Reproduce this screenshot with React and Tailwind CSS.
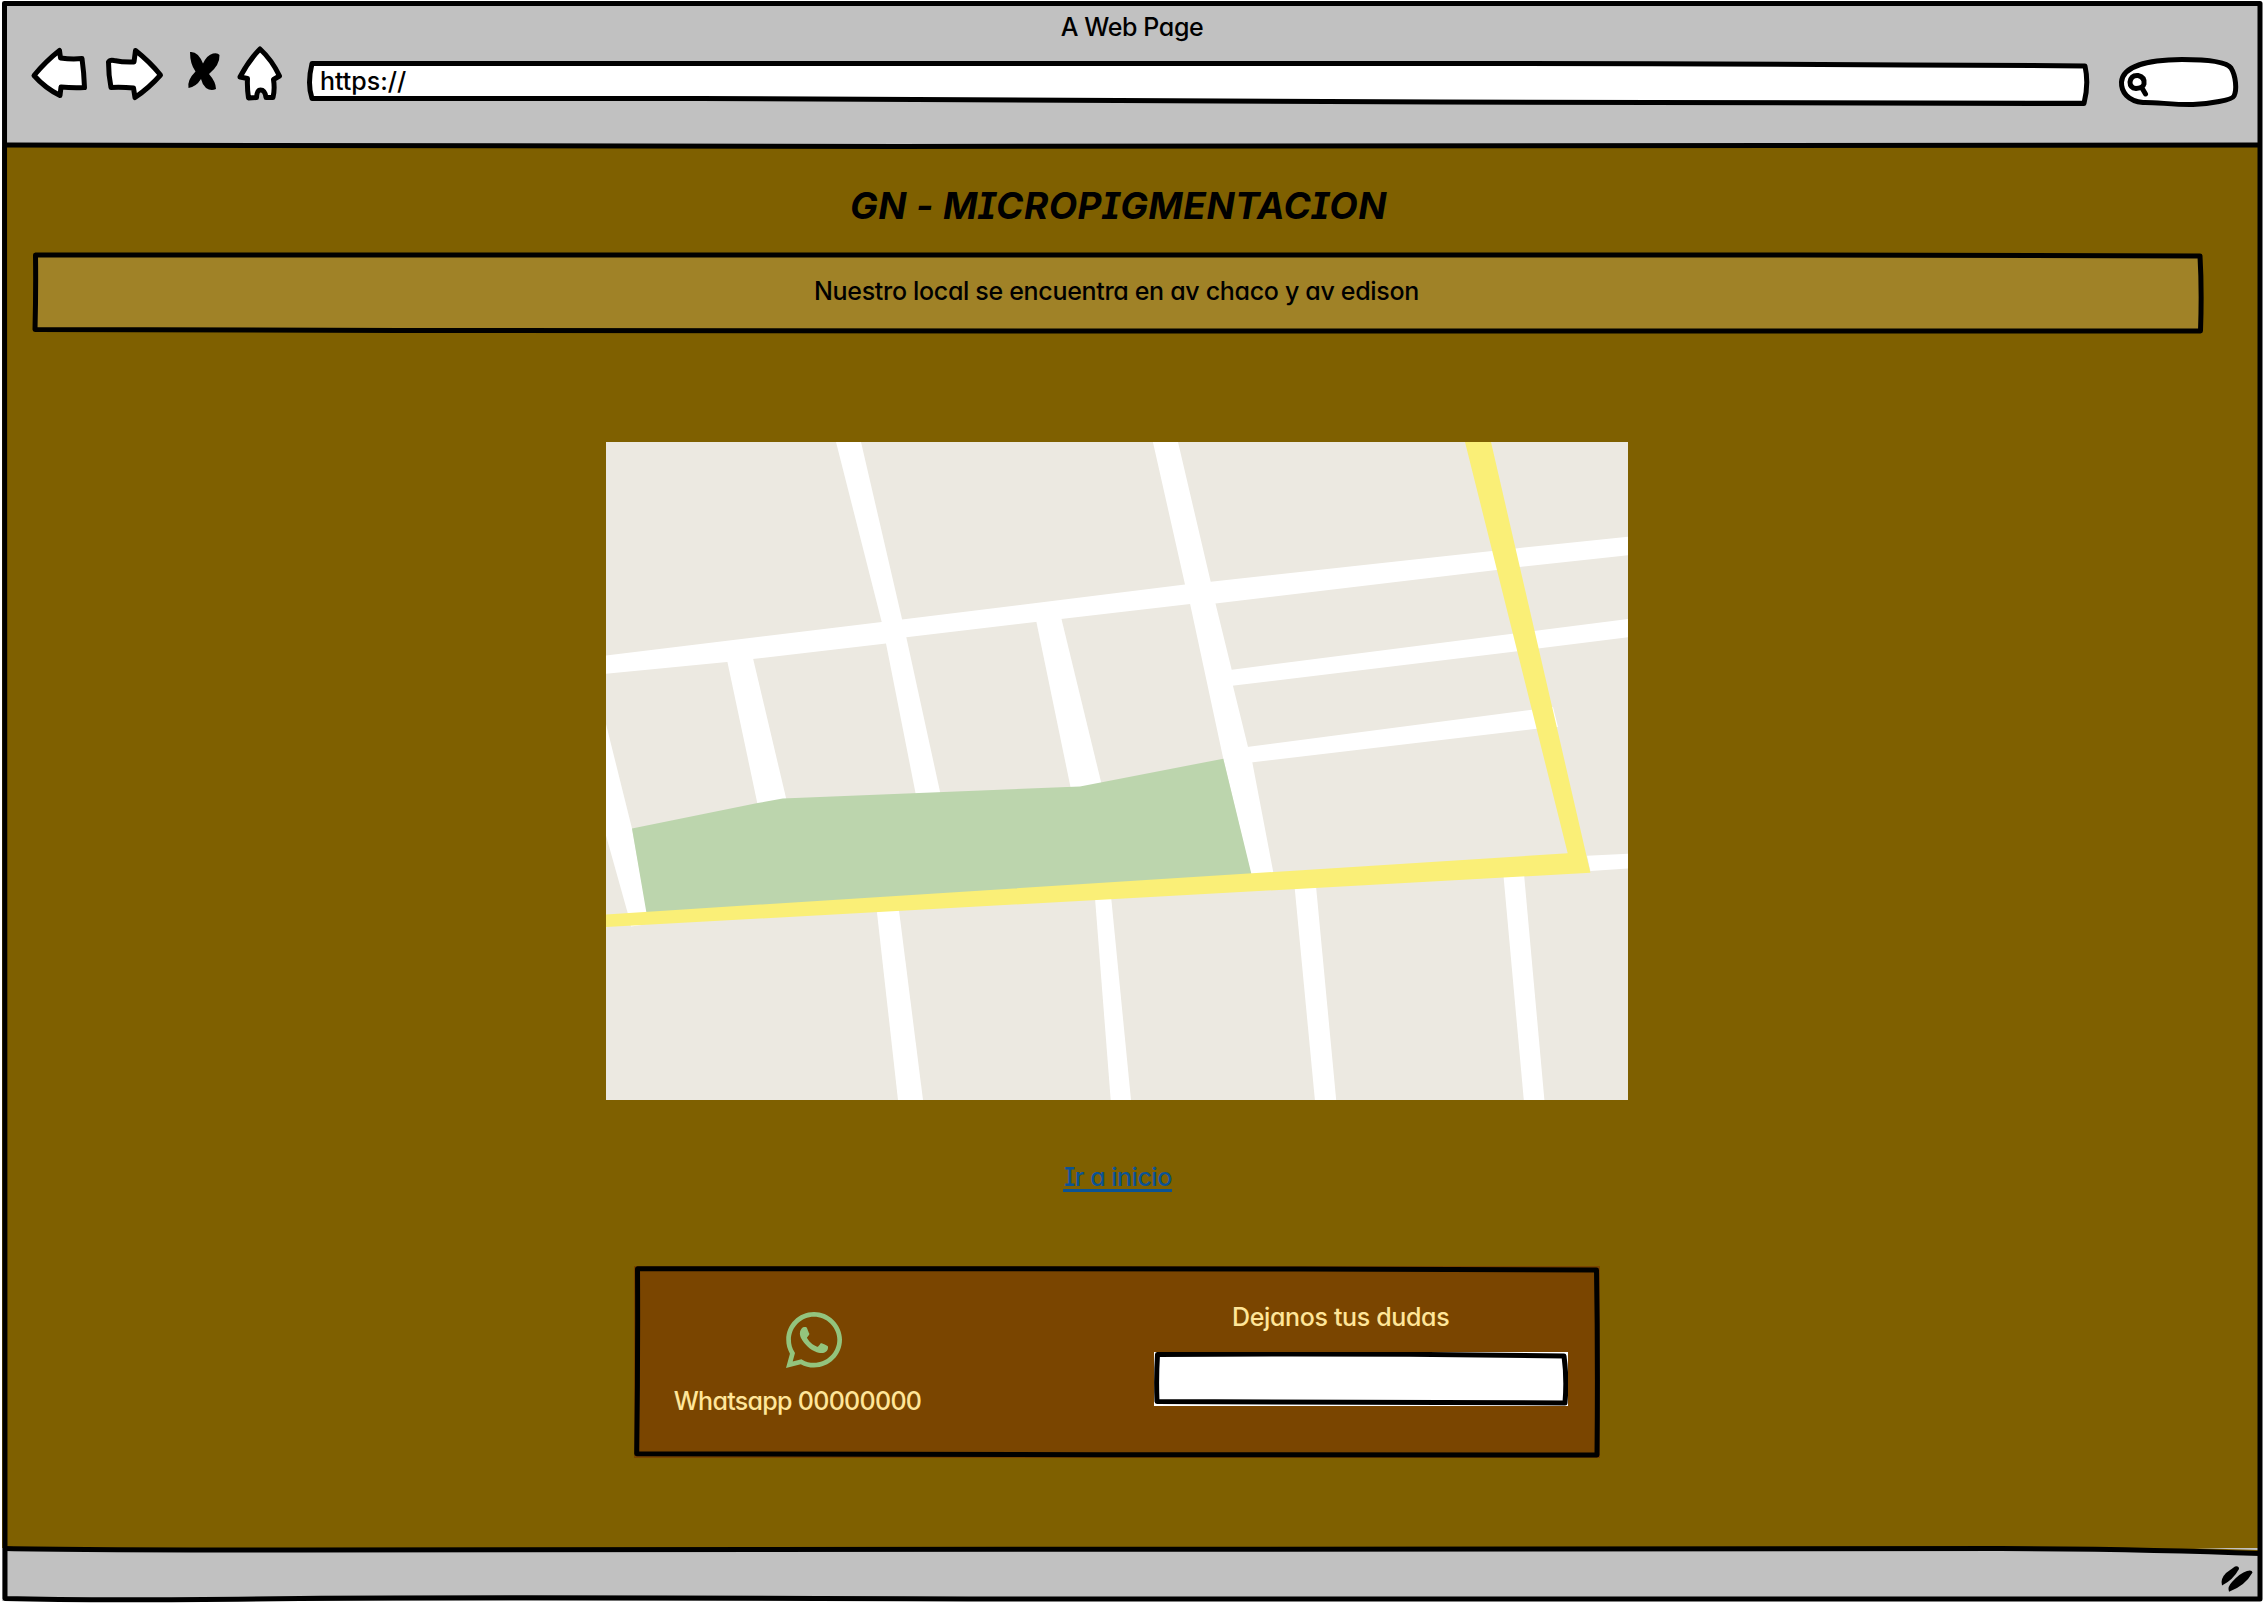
import { FaWhatsapp } from "react-icons/fa";

const hand = "font-['Inter',sans-serif] font-medium [font-feature-settings:'cv11','cv08'] whitespace-nowrap text-[25px] leading-[32px]";

function Outline({ viewBox, d }) {
  return (
    <svg
      viewBox={viewBox}
      className="pointer-events-none absolute inset-0 h-full w-full"
      fill="none"
      stroke="#000"
      strokeWidth="5"
      strokeLinejoin="round"
      strokeLinecap="round"
      aria-hidden="true"
    >
      <path d={d} />
    </svg>
  );
}

function ToolIcon({ viewBox, className, children }) {
  return (
    <svg
      viewBox={viewBox}
      className={`shrink-0 ${className}`}
      fill="#fff"
      stroke="#000"
      strokeWidth="5"
      strokeLinejoin="round"
      strokeLinecap="round"
    >
      {children}
    </svg>
  );
}

function BrowserBar() {
  return (
    <header className="h-[144px] bg-[#c1c1c1]">
      <h1 className={`${hand} pt-[8px] text-center tracking-[-0.4px]`}>A Web Page</h1>
      <nav className="mt-[2px] flex h-16 pl-7">
        <ToolIcon viewBox="30 45 60 64" className="w-[60px]">
          <path d="M34 75.5 Q46 61 59.5 50.5 L60.5 58 Q72 59.5 82 58.5 Q84 73 84.5 87.5 Q72 88 61 87 L60 95.5 Q45 88 34 75.5Z" />
        </ToolIcon>
        <ToolIcon viewBox="102 45 66 64" className="ml-3 w-[66px]">
          <path d="M108.5 62 Q110 59.5 114 60.5 Q124 62.5 134 62 L135.5 50.5 Q150 62 160.5 75 Q149 88 135 97.5 L133.5 88 Q122 87 111 87.5 Q108.5 75 108.5 62Z" />
        </ToolIcon>
        <ToolIcon viewBox="186 45 36 64" className="ml-[18px] w-9">
          <path
            fill="#000"
            stroke="none"
            d="M190 52 Q198 51 203 63.5 Q207 55 213 53.5 Q218 52.5 219.5 55 Q220 65 209 74 Q216 82 216 89 Q211 91.5 206 88 Q202 84 201 79 Q196 87 188.5 88 Q187 80 195.5 71.5 Q190 64 190 52Z"
          />
        </ToolIcon>
        <ToolIcon viewBox="235 45 50 64" className="ml-[13px] w-[50px]">
          <path d="M260 49 Q272 60 279.5 76 L273.5 79.5 Q275 89 273 97.5 L266 97.5 Q265 90 260.5 90 Q257 90 256.5 97.5 L248.5 98 Q247 88 247.5 78.5 L240 77 Q249 60 260 49Z" />
        </ToolIcon>
        <div className="relative ml-[19px] flex h-16 w-[1788px]">
          <div className="mx-[6px] mt-[19px] mb-2 h-[36px] flex-1 bg-white pt-px">
            <span className={`${hand} block pl-[10px]`}>https://</span>
          </div>
          <Outline
            viewBox="304 45 1788 64"
            d="M312 63.5 H1300 Q1700 63 2085 66 Q2089 84 2084 103.5 Q1800 103 1440 102 Q1000 99 700 98.5 H312 Q307 84 312 63.5Z"
          />
        </div>
        <ToolIcon viewBox="2116 45 124 64" className="ml-6 w-[124px]">
          <path d="M2143 102.5 C2128 101 2121 92 2121.5 82 C2123 66 2146 60 2182 59.5 C2205 59.5 2226 61 2231 68 C2236 76 2237 90 2234 96 C2232 100 2210 104 2193 104.5 C2175 105 2155 102 2143 102.5Z" />
          <path d="M2130 82 Q2131 75 2138 75.5 Q2145 77 2144 84 Q2143 88 2136 88.5 Q2130 88 2130 82Z M2142 88 L2145.5 94" />
        </ToolIcon>
      </nav>
    </header>
  );
}

const park = "26,386.5 151.7,361 176.7,356.6 474,344.5 617.3,316.7 645.3,431.6 645.3,436 41,474";
const highway = "0,472.4 961.7,411.3 859,0 885,0 984.4,430.8 0,485";

const streets = [
  "0,213.5 275.7,180.1 579,142.4 604.7,139.8 886,109 909.7,106.4 1022,94.7 1022,113.3 913.4,125 890.4,128 609.5,161.5 584.1,161.9 455,177 300.3,195.3 280,201.4 146.7,217 121,220 0,231.7",
  "230,0 255,0 296,177 300.3,195.3 334.3,351 309.7,352 280,201.4 275.7,180.1",
  "121,218 146.7,215 180.5,358 151.7,363",
  "430,178 455,175 495.3,341 474,346 464.7,346",
  "546.9,0 572,0 604.7,139.8 609.5,161.5 625.7,227.8 627,243.9 642,305 646.3,320.2 667.6,432 645.3,434 617.3,316.7 584.1,161.9 579,142.4",
  "624,228 906.3,191.8 1022,177 1022,195.3 911.4,209.2 624,244",
  "641,305 926,267.7 947,265 952,285 930.6,286.8 645,320.4",
  "0,282 26,386.5 41,470 36,483 25,484.5 21.7,471 0,393.5",
  "981,413.8 1022,411.7 1022,426.4 984.4,429",
  "270.7,468 292.7,466 317,658 292,658",
  "489,456 505,454 525,658 504.7,658",
  "688.6,445 709.9,443 730.2,658 708.9,658",
  "897.5,434 918,432 938.4,658 917.8,658",
];

function StreetMap() {
  return (
    <svg viewBox="0 0 1022 658" className="mt-[108px] ml-[604px] h-[658px] w-[1022px] bg-[#ece9e1]">
      <g fill="#fff">
        {streets.map((points) => (
          <polygon key={points} points={points} />
        ))}
      </g>
      <polygon points={park} fill="#bcd5ad" />
      <polygon points={highway} fill="#faef77" />
    </svg>
  );
}

function ContactPanel() {
  return (
    <section className="relative mt-[74px] ml-[632px] flex h-[192px] w-[966px] justify-between bg-[#7a4500] text-[#ffe599]">
      <Outline
        viewBox="634 1266 966 192"
        d="M637.5 1268.7 Q1100 1268 1300 1269 T1596.5 1270 Q1598 1360 1597 1455 L1100 1454.7 L636.7 1453.7 Q638 1360 637.5 1268.7Z"
      />
      <div className="ml-10 flex w-[247px] flex-col items-center pt-[42px]">
        <FaWhatsapp className="ml-[32px] h-16 w-16 text-[#93c47d]" />
        <p className={`${hand} mt-[13px] tracking-[-0.7px]`}>Whatsapp 00000000</p>
      </div>
      <div className="mr-8 flex w-[414px] flex-col pt-[35px]">
        <label className={`${hand} ml-[78px] tracking-[-0.35px]`}>Dejanos tus dudas</label>
        <div className="relative mt-[19px] h-[54px] w-[414px] bg-white">
          <Outline
            viewBox="1154 1352 414 54"
            d="M1157.5 1354.5 Q1360 1353 1564 1356 Q1567 1378 1565 1403 Q1360 1402 1157 1401.5 Q1156 1378 1157.5 1354.5Z"
          />
        </div>
      </div>
    </section>
  );
}

export default function App() {
  return (
    <div className="relative h-[1604px] w-[2264px] bg-white pt-[3px] pl-0.5 text-black">
      <div className="flex h-[1598px] w-[2260px] flex-col">
        <BrowserBar />
        <main className="flex-1 bg-[#7f6000]">
          <h2 className="pt-[36px] pl-[848px] font-['Inter',sans-serif] text-[37px] leading-[46px] font-bold tracking-[0.45px] whitespace-nowrap italic [font-feature-settings:'cv08']">
            GN - MICROPIGMENTACION
          </h2>
          <div className="relative mt-[23px] ml-[30px] flex h-[82px] w-[2172px]">
            <div className="m-[3px] flex flex-1 justify-center bg-[#a08227] pt-[20px] pr-[3px]">
              <p className={`${hand} tracking-[-0.32px]`}>Nuestro local se encuentra en av chaco y av edison</p>
            </div>
            <Outline
              viewBox="32 252 2172 82"
              d="M35.5 255 H1800 L2200 256 Q2202 290 2200.5 331 L1200 331 L400 330.5 L35 329.5 Q36 290 35.5 255Z"
            />
          </div>
          <StreetMap />
          <a
            href="#inicio"
            className={`${hand} mt-[61px] ml-[1061px] block h-[31px] w-[109px] border-b-[3px] border-[#0b5394] pl-px tracking-[-0.5px] text-[#0b5394]`}
          >
            Ir a inicio
          </a>
          <ContactPanel />
        </main>
        <footer className="h-[53px] bg-[#c1c1c1]" />
      </div>
      <svg viewBox="0 0 2264 1604" className="pointer-events-none absolute inset-0 h-full w-full" fill="none" stroke="#000" strokeWidth="5" strokeLinejoin="round">
        <path d="M2130 1546 L2258 1550 V1554 L2130 1549Z" fill="#7f6000" stroke="none" />
        <path d="M4.5 3.5 H2260 V1599 Q1600 1600 1000 1599 Q500 1597 300 1598.5 Q100 1601 5 1598.5 Q3 800 4.5 3.5Z" />
        <path d="M5 145 Q200 146.5 900 146.5 T2260 145" />
        <path d="M5 1548.5 Q80 1550 300 1550 Q1200 1547 2000 1548.5 Q2150 1549 2260 1553.5" />
        <g fill="#000" stroke="none">
          <path d="M2235 1566.5 Q2239 1565.5 2239 1569 Q2233 1580 2222 1585.5 Q2220 1579 2226 1573Z" />
          <path d="M2247 1571 Q2252 1569.5 2252.5 1572.5 Q2245 1586 2229 1591.7 Q2227 1587 2232 1582 Q2240 1573 2247 1571Z" />
        </g>
      </svg>
    </div>
  );
}
